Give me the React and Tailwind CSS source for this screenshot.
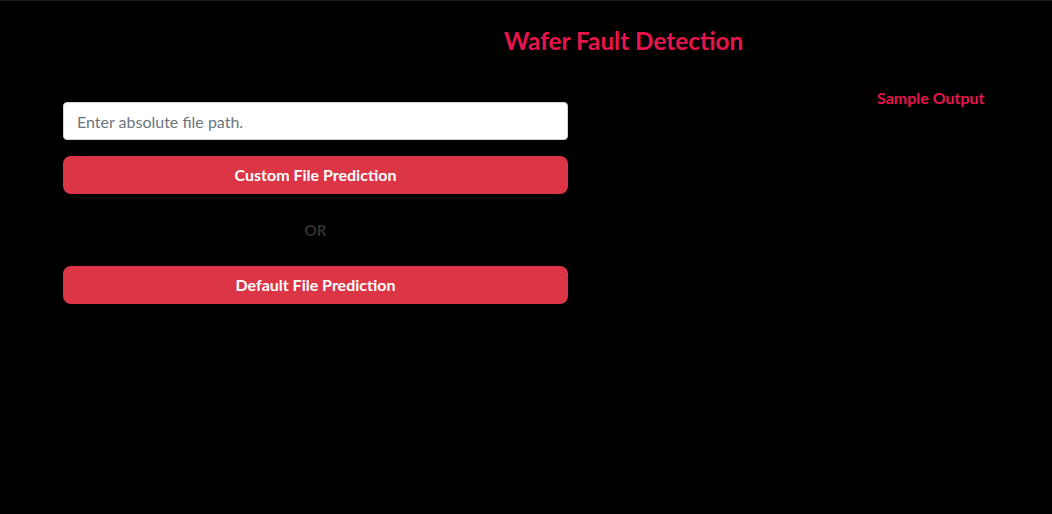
import React from 'react';

const App = () => {
  return (
    <div className="w-full h-[514px] bg-black border-t border-[#1a1a1a] font-['Lato','Liberation_Sans',sans-serif]">
      <div className="pt-[25px] pl-[504px]">
        <h1 className="text-[24.3px] leading-[29px] font-bold text-[#e8144c]">Wafer Fault Detection</h1>
      </div>

      <div className="flex mt-[22px]">
        <div className="ml-[63px] w-[505px] pt-[25px] flex flex-col">
          <input
            type="text"
            placeholder="Enter absolute file path."
            className="h-[38px] w-full bg-white border border-[#ced4da] rounded-[4px] px-[13px] text-[16px] text-[#495057] placeholder:text-[#6c757d] outline-none"
          />
          <button className="mt-[16px] h-[38px] w-full bg-[#dc3545] rounded-lg text-white text-[16px] font-bold">
            Custom File Prediction
          </button>
          <div className="mt-[26px] text-center text-[15px] font-bold text-[#2f3337] leading-[20px]">OR</div>
          <button className="mt-[26px] h-[38px] w-full bg-[#dc3545] rounded-lg text-white text-[16px] font-bold">
            Default File Prediction
          </button>
        </div>
        <div className="flex-1 pl-[309px] pt-[11px]">
          <h3 className="text-[16px] leading-[20px] font-bold text-[#e8144c]">Sample Output</h3>
        </div>
      </div>
    </div>
  );
};

export default App;
